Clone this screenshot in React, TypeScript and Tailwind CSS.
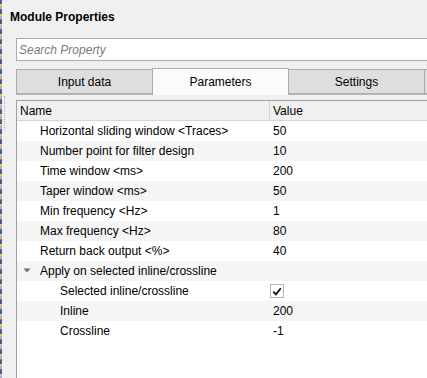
import React from 'react';

type Row = {
    name: string;
    value?: string;
    level: number;
    group?: boolean;
    check?: boolean;
};

const rows: Row[] = [
    { name: 'Horizontal sliding window <Traces>', value: '50', level: 1 },
    { name: 'Number point for filter design', value: '10', level: 1 },
    { name: 'Time window <ms>', value: '200', level: 1 },
    { name: 'Taper window <ms>', value: '50', level: 1 },
    { name: 'Min frequency <Hz>', value: '1', level: 1 },
    { name: 'Max frequency <Hz>', value: '80', level: 1 },
    { name: 'Return back output <%>', value: '40', level: 1 },
    { name: 'Apply on selected inline/crossline', level: 1, group: true },
    { name: 'Selected inline/crossline', level: 2, check: true },
    { name: 'Inline', value: '200', level: 2 },
    { name: 'Crossline', value: '-1', level: 2 },
];

const Tab = ({ label, active, first }: { label: string; active?: boolean; first?: boolean }) => {
    if (active) {
        return (
            <div className="w-[137px] shrink-0 h-[27px] -mb-px -ml-px bg-[#fbfbfb] border border-b-0 border-[#acacac] flex items-center justify-center text-black">
                {label}
            </div>
        );
    }
    return (
        <div className={`w-[137px] shrink-0 h-[25px] mt-[2px] bg-[#dedede] border border-[#acacac] ${first ? '' : '-ml-px'} flex items-center justify-center text-black`}>
            {label}
        </div>
    );
};

export default function App() {
    return (
        <div
            className="w-[427px] h-[378px] bg-[#f0f0f0] flex overflow-hidden text-[12px] text-black"
            style={{ fontFamily: '"Liberation Sans", Arial, sans-serif' }}
        >
            <div className="w-[2px] shrink-0 bg-[repeating-linear-gradient(180deg,#3d5ea8_0px,#3d5ea8_4px,#f3c744_4px,#f3c744_6px,#9fb2d8_6px,#9fb2d8_9px,#e2572e_9px,#e2572e_10px)]" />
            <div className="relative flex-1 flex flex-col min-w-0">
                <div className="h-[34px] shrink-0 pl-[8px] pt-[9px] font-bold text-[12px] leading-[16px]">Module Properties</div>

                <div className="ml-[14px] mt-[4px] h-[23px] shrink-0 w-[420px] bg-white border border-[#ababab] flex items-center pl-[2px] italic text-[#7b7b7b]">
                    Search Property
                </div>

                <div className="ml-[14px] mt-[6px] flex items-end relative z-10 shrink-0">
                    <Tab label="Input data" first />
                    <Tab label="Parameters" active />
                    <Tab label="Settings" />
                    <div className="w-[20px] shrink-0 h-[25px] -ml-px bg-[#dedede] border border-[#acacac]" />
                </div>
                <div className="ml-[14px] border-t border-[#b9b9b9] h-[6px] shrink-0" />

                <div className="ml-[14px] flex-1 w-[430px] bg-white border-l border-t border-[#a0a0a0]">
                    <div className="h-[20px] flex bg-[#f0f0f0] border-b border-[#d5d5d5]">
                        <div className="w-[253px] pl-[3px] flex items-center border-r border-[#d5d5d5]">Name</div>
                        <div className="pl-[3px] flex items-center">Value</div>
                    </div>
                    {rows.map((r, i) => (
                        <div key={r.name} className={`h-[20px] flex items-center ${i % 2 === 1 ? 'bg-[#f5f5f5]' : 'bg-white'}`}>
                            <div className={`w-[253px] flex items-center whitespace-nowrap overflow-hidden ${r.level === 2 ? 'pl-[43px]' : 'pl-[23px]'} relative`}>
                                {r.group && (
                                    <svg className="absolute left-[6px] top-[6px]" width="8" height="5" viewBox="0 0 8 5">
                                        <path d="M0.5 0.5 L7.5 0.5 L4 4.5 Z" fill="#707070" />
                                    </svg>
                                )}
                                {r.name}
                            </div>
                            <div className="pl-[3px] flex items-center">
                                {r.check ? (
                                    <div className="-ml-[3px] w-[14px] h-[14px] bg-white border border-[#b3b3b3] flex items-center justify-center">
                                        <svg width="10" height="9" viewBox="0 0 10 9">
                                            <path d="M1.3 4.6 L3.9 7.4 L8.8 1.2" stroke="#111" strokeWidth="1.8" fill="none" />
                                        </svg>
                                    </div>
                                ) : (
                                    r.value
                                )}
                            </div>
                        </div>
                    ))}
                </div>

                <div className="absolute left-[2px] top-[96px] h-[34px] border-l border-dotted border-[#b0b0b0]" />
            </div>
        </div>
    );
}
